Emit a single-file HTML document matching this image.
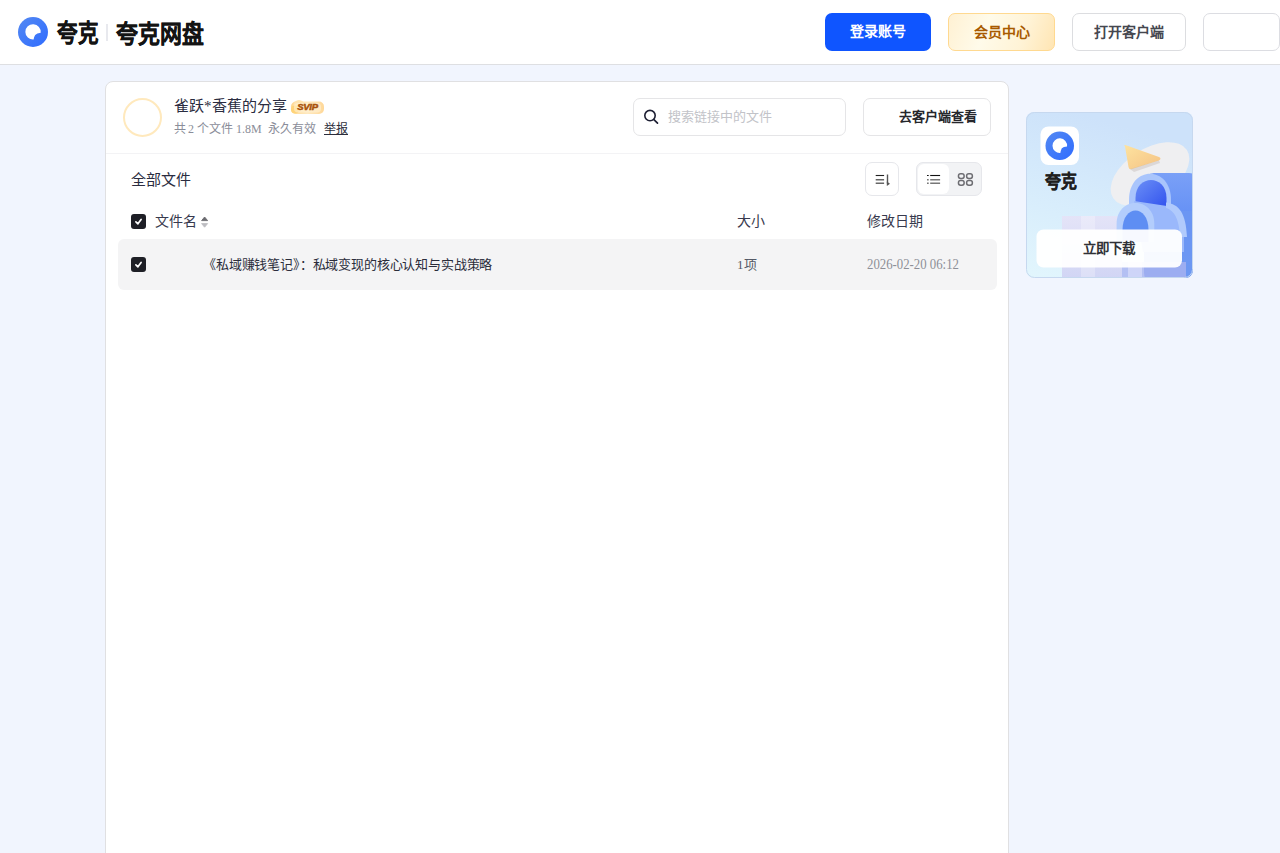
<!DOCTYPE html>
<html lang="zh-CN">
<head>
<meta charset="utf-8">
<title>夸克网盘分享</title>
<style>
*{box-sizing:border-box;margin:0;padding:0}
html,body{width:1280px;height:853px;overflow:hidden}
body{background:#f1f5fe;font-family:"Liberation Sans",sans-serif;color:#25262b;position:relative}
.abs{position:absolute}
#hdr{position:absolute;left:0;top:0;width:1280px;height:65px;background:#fff;border-bottom:1px solid #dedfe2}
.logo-c{left:18px;top:17px;width:30px;height:30px;border-radius:50%;background:linear-gradient(160deg,#5b8cf7,#2f6bff)}
.logo-t{font-weight:bold;font-size:25px;line-height:26px;color:#141414;-webkit-text-stroke:0.35px #141414;white-space:nowrap;transform-origin:0 0}
.sep{left:106px;top:24px;width:1.5px;height:17px;background:#e8e9ee}
.btn{position:absolute;top:13px;height:38px;border-radius:7px;font-size:14px;font-weight:bold;text-align:center;line-height:36px;white-space:nowrap}
#b1{left:825px;width:106px;background:#0f55ff;color:#fff;line-height:37px}
#b2{left:948px;width:107px;border:1px solid #ffd990;background:linear-gradient(110deg,#fff1d3 0%,#fffbea 35%,#fff3d6 70%,#ffe5b3 100%);color:#a85a00}
#b3{left:1072px;width:114px;border:1px solid #dcdde0;background:#fff;color:#45474f}
#b4{left:1203px;width:77px;border:1px solid #dcdde2;background:#fff}

#card{position:absolute;left:105px;top:81px;width:904px;height:800px;background:#fff;border:1px solid #e0e0e2;border-radius:8px}
.avatar{left:17px;top:16px;width:39px;height:39px;border-radius:50%;border:2px solid #ffe9bd}
.title{left:68px;top:14px;font-size:15px;line-height:20px;color:#2a2c40;white-space:nowrap;font-family:"Liberation Serif",serif}
.sub{top:39px;font-size:12px;line-height:16px;color:#8a8d99;white-space:nowrap;font-family:"Liberation Serif",serif}
.sub u{color:#2b2d3b;text-decoration:underline}
.svip{left:184px;top:18px;width:34px;height:14px;border-radius:7px;background:linear-gradient(90deg,#ffd77a,#ffe9a8);color:#a9520c;font-size:9px;font-weight:bold;font-style:italic;text-align:center;line-height:14px;font-family:"Liberation Sans",sans-serif;letter-spacing:-0.5px}
.search{left:527px;top:16px;width:213px;height:38px;border:1px solid #e5e5e7;border-radius:7px}
.search .ph{position:absolute;left:34px;top:10px;font-size:13px;line-height:16px;color:#c2c3c8;white-space:nowrap}
.gocl{left:757px;top:16px;width:128px;height:38px;border:1px solid #e5e5e7;border-radius:7px;font-size:13px;font-weight:bold;color:#25262b;line-height:36px;padding-left:35px;white-space:nowrap}
.divider{left:0;top:71px;width:902px;height:1px;background:#f3f3f5}
.allf{left:25px;top:88px;font-size:15px;line-height:20px;color:#2a2c40;white-space:nowrap}
.sortb{left:759px;top:80px;width:34px;height:34px;border:1px solid #e6e7eb;border-radius:7px;background:#fff}
.viewg{left:810px;top:80px;width:66px;height:34px;border:1px solid #e6e7eb;border-radius:7px;background:#f2f3f5}
.viewg .on{position:absolute;left:1px;top:1px;width:31px;height:30px;border-radius:6px;background:#fff}
.cb{width:15px;height:15px;border-radius:3px;background:#1e1f26}
.th{top:130px;font-size:14px;line-height:18px;color:#383a4e;white-space:nowrap}
.row{left:12px;top:157px;width:879px;height:51px;background:#f4f4f5;border-radius:6px}
.fname{left:97px;top:175px;font-size:13px;letter-spacing:-0.16px;line-height:16px;color:#2b2d3b;white-space:nowrap;font-family:"Liberation Serif",serif}
.sz{left:631px;top:175px;font-size:13px;line-height:16px;color:#555a66;white-space:nowrap;font-family:"Liberation Serif",serif}
.dt{left:761px;top:175px;font-size:13.6px;line-height:16px;color:#8d8f97;transform:scaleX(0.94);transform-origin:0 0;white-space:nowrap;font-family:"Liberation Serif",serif}

#ad{position:absolute;left:1026px;top:112px;width:167px;height:166px}
</style>
</head>
<body>
<div id="hdr">
  <svg class="abs" style="left:18px;top:17px" width="30" height="30" viewBox="0 0 30 30"><defs><linearGradient id="lg1" x1="0" y1="0" x2="1" y2="1"><stop offset="0" stop-color="#5489f2"/><stop offset="1" stop-color="#2f6cff"/></linearGradient></defs><circle cx="15" cy="15" r="15" fill="url(#lg1)"/><path d="M22.7 15.8A7.7 7.7 0 1 0 15.6 22.6L16.1 20.3Q16.6 17.2 19.4 16.4Z" fill="#fff"/></svg>
  <div class="abs logo-t" style="left:57px;top:20px;transform:scaleX(0.82)">夸克</div>
  <div class="abs sep"></div>
  <div class="abs logo-t" style="left:116px;top:21px;transform:scaleX(0.875)">夸克网盘</div>
  <div class="btn" id="b1">登录账号</div>
  <div class="btn" id="b2">会员中心</div>
  <div class="btn" id="b3">打开客户端</div>
  <div class="btn" id="b4"></div>
</div>

<div id="card">
  <div class="abs avatar"></div>
  <div class="abs title">雀跃*香蕉的分享</div>
  <svg class="abs" style="left:184px;top:17px" width="35" height="16" viewBox="0 0 35 16"><defs><linearGradient id="sv" x1="0" y1="0" x2="1" y2="0"><stop offset="0" stop-color="#ffd892"/><stop offset="0.5" stop-color="#ffe9bf"/><stop offset="1" stop-color="#ffd898"/></linearGradient></defs><rect x="1" y="2.5" width="33" height="12.5" rx="5" fill="url(#sv)"/><circle cx="9" cy="6.5" r="5.5" fill="#ffe4b0"/><circle cx="5" cy="10.5" r="4" fill="#ffd47a"/><rect x="4" y="4" width="27" height="9.5" rx="4" fill="#fff1d6" opacity="0.6"/><text x="17.5" y="11.2" text-anchor="middle" font-family="Liberation Sans, sans-serif" font-size="9.5" font-weight="bold" font-style="italic" fill="#a9520a" stroke="#a9520a" stroke-width="0.5" letter-spacing="-0.3">SVIP</text></svg>
  <div class="abs sub" style="left:68px">共</div><div class="abs sub" style="left:82px">2</div><div class="abs sub" style="left:91px">个文件</div><div class="abs sub" style="left:130px">1.8M</div><div class="abs sub" style="left:162px">永久有效</div><div class="abs sub" style="left:218px"><u>举报</u></div>
  <div class="abs search"><svg class="abs" style="left:9px;top:9px" width="18" height="18" viewBox="0 0 18 18"><circle cx="7" cy="7.6" r="5.2" fill="none" stroke="#1d1f33" stroke-width="1.6"/><path d="M10.9 11.6L14.5 15.1" stroke="#1d1f33" stroke-width="1.7" stroke-linecap="round"/></svg><div class="ph">搜索链接中的文件</div></div>
  <div class="abs gocl">去客户端查看</div>
  <div class="abs divider"></div>
  <div class="abs allf">全部文件</div>
  <div class="abs sortb"><svg class="abs" style="left:0;top:0" width="32" height="32" viewBox="0 0 32 32"><path d="M9.7 12.5h8.4" stroke="#222" stroke-width="1.1"/><path d="M9.7 16.7h8.4M9.7 20.3h8.4" stroke="#666" stroke-width="1.4"/><path d="M21.5 11.5v9" stroke="#555" stroke-width="1.4"/><path d="M20.8 18.5l3.2 2.2-3.2 2.2z" fill="#555"/></svg></div>
  <div class="abs viewg"><div class="on"></div><svg class="abs" style="left:0;top:0" width="64" height="32" viewBox="0 0 64 32"><path d="M10 12.5h1.7" stroke="#111" stroke-width="1.1"/><path d="M10 16.7h1.7M10 20.3h1.7" stroke="#777" stroke-width="1.4"/><path d="M13.2 12.5h9.9" stroke="#111" stroke-width="1.1"/><path d="M13.2 16.7h9.9M13.2 20.3h9.9" stroke="#777" stroke-width="1.4"/><g fill="none" stroke="#6d6d72" stroke-width="1.5"><rect x="41.45" y="10.85" width="5.7" height="4.6" rx="2.2"/><rect x="49.6" y="10.85" width="5.8" height="4.6" rx="2.2"/><rect x="41.45" y="17.6" width="5.7" height="4.6" rx="2.2"/><rect x="49.6" y="17.6" width="5.8" height="4.6" rx="2.2"/></g></svg></div>
  <div class="abs cb" style="left:25px;top:132px"><svg class="abs" style="left:0;top:0" width="15" height="15" viewBox="0 0 15 15"><path d="M4.9 7.9L6.9 9.8L10.1 5.5" fill="none" stroke="#fff" stroke-width="1.7" stroke-linecap="round" stroke-linejoin="round"/></svg></div>
  <div class="abs th" style="left:49px">文件名</div><svg class="abs" style="left:95px;top:134px" width="8" height="12" viewBox="0 0 8 12"><path d="M3.6 1L6.6 4.6H0.6Z" fill="#6b6b70" stroke="#6b6b70" stroke-width="0.9" stroke-linejoin="round"/><path d="M3.6 11.2L6.6 7.6H0.6Z" fill="#bdbdc2" stroke="#bdbdc2" stroke-width="0.9" stroke-linejoin="round"/></svg>
  <div class="abs th" style="left:631px">大小</div>
  <div class="abs th" style="left:761px">修改日期</div>
  <div class="abs row"></div>
  <div class="abs cb" style="left:25px;top:175px"><svg class="abs" style="left:0;top:0" width="15" height="15" viewBox="0 0 15 15"><path d="M4.9 7.9L6.9 9.8L10.1 5.5" fill="none" stroke="#fff" stroke-width="1.7" stroke-linecap="round" stroke-linejoin="round"/></svg></div>
  <div class="abs fname">《私域赚钱笔记》：私域变现的核心认知与实战策略</div>
  <div class="abs sz">1项</div>
  <div class="abs dt">2026-02-20 06:12</div>
</div>

<div id="ad"><svg width="167" height="166" viewBox="0 0 167 166" style="position:absolute;left:0;top:0">
<defs>
<linearGradient id="abg" x1="0.3" y1="0" x2="0" y2="1"><stop offset="0" stop-color="#cde2fa"/><stop offset="0.6" stop-color="#d9eefc"/><stop offset="1" stop-color="#e2f6fd"/></linearGradient>
<linearGradient id="blk" x1="0" y1="0" x2="0" y2="1"><stop offset="0" stop-color="#7aa0f7"/><stop offset="0.5" stop-color="#5f8cf4"/><stop offset="1" stop-color="#6f9af0"/></linearGradient>
<linearGradient id="inr" x1="0" y1="0" x2="1" y2="1"><stop offset="0" stop-color="#6b8ff6"/><stop offset="1" stop-color="#3152ee"/></linearGradient>
<linearGradient id="tri" x1="0" y1="0" x2="1" y2="1"><stop offset="0" stop-color="#fde3a0"/><stop offset="1" stop-color="#f5c283"/></linearGradient>
<linearGradient id="lav" x1="0" y1="0" x2="0" y2="1"><stop offset="0" stop-color="#e6e2f7"/><stop offset="1" stop-color="#cfd0f3"/></linearGradient>
<linearGradient id="lg2" x1="0" y1="0" x2="1" y2="1"><stop offset="0" stop-color="#5489f2"/><stop offset="1" stop-color="#2f6cff"/></linearGradient>
<clipPath id="aclip"><rect x="0" y="0" width="167" height="166" rx="8"/></clipPath>
</defs>
<g clip-path="url(#aclip)">
<rect width="167" height="166" fill="url(#abg)"/>
<rect x="36" y="104" width="60" height="62" fill="url(#lav)" opacity="0.85"/>
<rect x="55" y="104" width="14" height="62" fill="#ffffff" opacity="0.25"/>
<ellipse cx="124" cy="62" rx="44" ry="25" transform="rotate(-33 124 62)" fill="#efeff1"/>
<path d="M99 34.5Q97 32.5 100 33.2L133 45Q136 46.5 133 48.5L106 57Q103 58 102.5 55Z" fill="url(#tri)"/>
<path d="M104 57L133 48.5L134 51L108 60Z" fill="#b9b0a8" opacity="0.35"/>
<rect x="118" y="61" width="55" height="110" rx="10" fill="url(#blk)"/>
<rect x="143" y="99" width="30" height="70" fill="#6d97f2" opacity="0.8"/>
<path d="M103 104V88C103 53 145 53 145 88V104Z" fill="#a9c5fc"/>
<path d="M109.5 96V86C109.5 62 140.5 62 140.5 86V96Z" fill="url(#inr)"/>
<path d="M108 89L141 94C150 95 158 103 158 125V140H117Z" fill="#9ab8fb"/>
<path d="M140 90.5C153 92 160 101 161 125L154 125C153 107 149 99 140 96Z" fill="#b0cafc"/>
<path d="M90.6 130V112C90.6 84 128.3 84 128.3 112V130Z" fill="#b3cdfc"/>
<path d="M96.5 130V118C96.5 92 122.5 92 122.5 118V130Z" fill="#5e8ef3"/>
<path d="M96 150H160V166H96Z" fill="#a9b3f0" opacity="0.8"/>
<rect x="102" y="150" width="14" height="16" fill="#dfe3fb" opacity="0.6"/>
<rect x="14.5" y="14.5" width="38.5" height="38.5" rx="8" fill="#fff"/>
<g transform="translate(19.5 19.5) scale(0.95)"><circle cx="15" cy="15" r="15" fill="url(#lg2)"/><path d="M22.7 15.8A7.7 7.7 0 1 0 15.6 22.6L16.1 20.3Q16.6 17.2 19.4 16.4Z" fill="#fff"/></g>
<rect x="10.5" y="117.5" width="145.5" height="38" rx="7" fill="#ffffff" opacity="0.95"/>
</g>
<rect x="0.5" y="0.5" width="166" height="165" rx="8" fill="none" stroke="#c6d8ef"/>
</svg>
<div class="abs" style="left:19px;top:60px;font-size:18px;line-height:20px;font-weight:bold;color:#1f1f1f;white-space:nowrap;-webkit-text-stroke:0.4px #1f1f1f;transform:scaleX(0.88);transform-origin:0 0">夸克</div>
<div class="abs" style="left:10px;top:127px;width:146px;text-align:center;font-size:13.5px;line-height:20px;font-weight:bold;color:#303136;white-space:nowrap">立即下载</div>
</div>
</body>
</html>
